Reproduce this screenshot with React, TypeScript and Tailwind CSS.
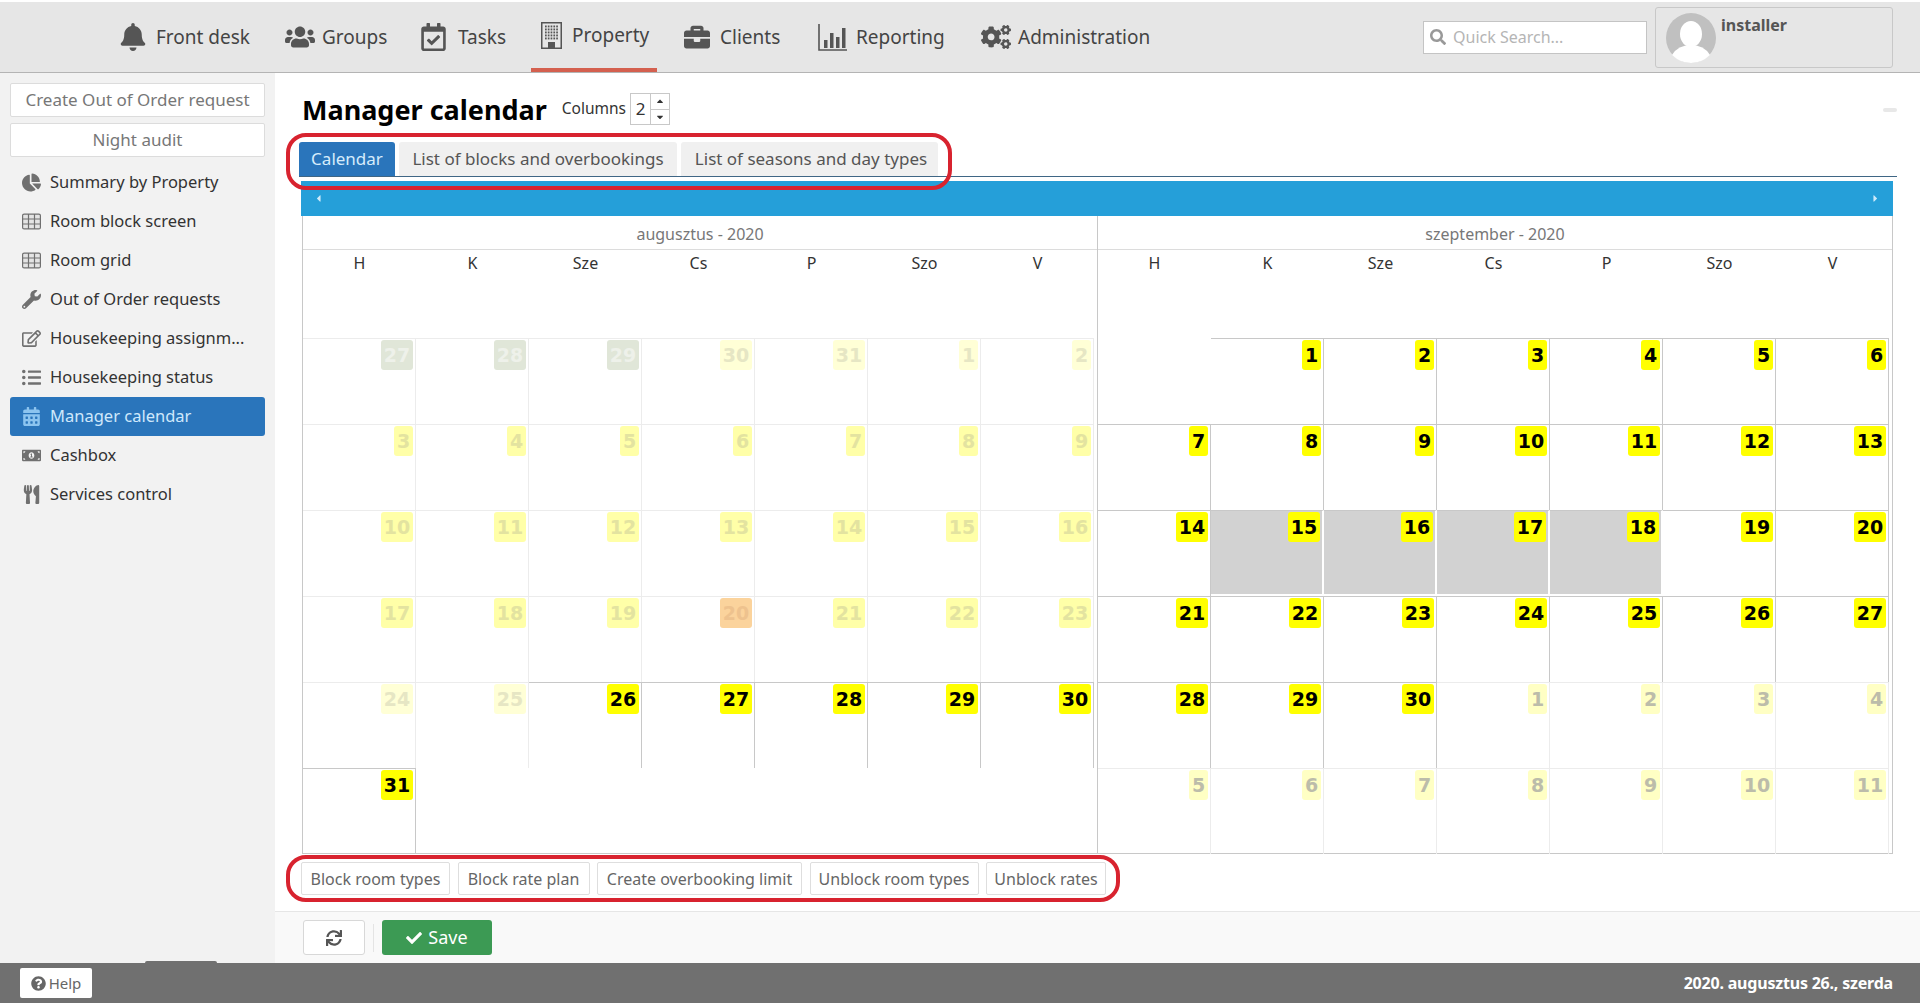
import { FaBell, FaUsers, FaRegCalendarCheck, FaBriefcase, FaCogs, FaSearch, FaChartPie, FaWrench, FaRegEdit, FaListUl, FaCalendarAlt, FaMoneyBillAlt, FaUtensils, FaSync, FaCheck, FaQuestionCircle, FaCaretLeft, FaCaretRight, FaCaretUp, FaCaretDown } from "react-icons/fa";

function BuildingIcon({ className }: { className?: string }) {
  const dots = [];
  for (let r = 0; r < 5; r++) {
    for (let c = 0; c < 5; c++) {
      dots.push(<rect key={`${r}-${c}`} x={4 + c * 2.8} y={3.5 + r * 3} width="1.7" height="1.9" fill="#555" />);
    }
  }
  return (
    <svg viewBox="0 0 21 27" className={className}>
      <rect x="0.75" y="0.75" width="19.5" height="25.5" fill="none" stroke="#555" strokeWidth="1.5" />
      {dots}
      <rect x="7" y="20" width="7" height="6" fill="#555" />
    </svg>
  );
}

function BarsIcon({ className }: { className?: string }) {
  return (
    <svg viewBox="0 0 29 27" className={className}>
      <path d="M1 0V26H29" fill="none" stroke="#555" strokeWidth="1.6" />
      <rect x="6" y="16" width="3.5" height="8" fill="#555" />
      <rect x="12" y="9" width="3.5" height="15" fill="#555" />
      <rect x="18" y="13" width="3.5" height="11" fill="#555" />
      <rect x="24" y="4" width="3.5" height="20" fill="#555" />
    </svg>
  );
}

function GridIcon({ className }: { className?: string }) {
  return (
    <svg viewBox="0 0 19 16" className={className}>
      <rect x="0.6" y="0.6" width="17.8" height="14.8" rx="1.5" fill="#e4e4e4" stroke="#707070" strokeWidth="1.2" />
      <path d="M0.6 5.5H18.4M0.6 10.5H18.4M6.5 0.6V15.4M12.5 0.6V15.4" stroke="#707070" strokeWidth="1.2" />
    </svg>
  );
}

const navItems = [
  { label: "Front desk", icon: <FaBell className="w-[26px] h-[28px] text-[#555]" />, box: "w-[36px]", width: "w-[165px] ml-[120px]" },
  { label: "Groups", icon: <FaUsers className="w-[30px] h-[28px] text-[#555]" />, box: "w-[37px]", width: "w-[136px]" },
  { label: "Tasks", icon: <FaRegCalendarCheck className="w-[25px] h-[28px] text-[#555]" />, box: "w-[37px]", width: "w-[110px]" },
  { label: "Property", icon: <BuildingIcon className="w-[21px] h-[27px]" />, box: "w-[31px]", width: "w-[152px]" },
  { label: "Clients", icon: <FaBriefcase className="w-[28px] h-[26px] text-[#555]" />, box: "w-[37px]", width: "w-[135px]" },
  { label: "Reporting", icon: <BarsIcon className="w-[29px] h-[27px]" />, box: "w-[38px]", width: "w-[163px]" },
  { label: "Administration", icon: <FaCogs className="w-[30px] h-[26px] text-[#555]" />, box: "w-[37px]", width: "w-[200px]" },
];

const sideItems = [
  { label: "Summary by Property", icon: FaChartPie },
  { label: "Room block screen", icon: GridIcon },
  { label: "Room grid", icon: GridIcon },
  { label: "Out of Order requests", icon: FaWrench },
  { label: "Housekeeping assignm...", icon: FaRegEdit },
  { label: "Housekeeping status", icon: FaListUl },
  { label: "Manager calendar", icon: FaCalendarAlt, active: true },
  { label: "Cashbox", icon: FaMoneyBillAlt },
  { label: "Services control", icon: FaUtensils },
];

const actions = [
  { label: "Block room types", width: "w-[149px]" },
  { label: "Block rate plan", width: "w-[132px]" },
  { label: "Create overbooking limit", width: "w-[205px]" },
  { label: "Unblock room types", width: "w-[169px]" },
  { label: "Unblock rates", width: "w-[120px]" },
];

const weekdays = ["H", "K", "Sze", "Cs", "P", "Szo", "V"];

type Kind = "past" | "fade" | "pale" | "next" | "today" | "on" | "block";
type Day = { n: number; kind: Kind } | null;

const run = (from: number, to: number, kind: Kind): Day[] => {
  const out: Day[] = [];
  for (let n = from; n <= to; n++) out.push({ n, kind });
  return out;
};

const august: Day[] = [
  ...run(27, 29, "past"),
  ...run(30, 31, "pale"),
  ...run(1, 2, "pale"),
  ...run(3, 9, "fade"),
  ...run(10, 16, "fade"),
  ...run(17, 19, "fade"),
  { n: 20, kind: "today" },
  ...run(21, 23, "fade"),
  ...run(24, 25, "pale"),
  ...run(26, 31, "on"),
];

const september: Day[] = [
  null,
  ...run(1, 14, "on"),
  ...run(15, 18, "block"),
  ...run(19, 30, "on"),
  ...run(1, 4, "next"),
  ...run(5, 11, "next"),
];

const badgeStyle: Record<Kind, string> = {
  past: "bg-[#e0e6d8] text-[#eef1ea]",
  fade: "bg-[#ffffa8] text-[#e3e3a0]",
  pale: "bg-[#ffffd6] text-[#e6e6c4]",
  next: "bg-[#ffffc4] text-[#bcbcaa]",
  today: "bg-[#fbd39c] text-[#eec28e]",
  on: "bg-[#ffff00] text-black",
  block: "bg-[#ffff00] text-black",
};

function DayCell({ day }: { day: Day }) {
  if (!day) return <div className="h-[86px]" />;
  const strong = day.kind === "on" || day.kind === "block";
  return (
    <div
      className={`h-[86px] flex justify-end items-start pt-[1px] pr-[2px] border-t ${
        strong ? "border-t-[#c8c8c8]" : "border-t-[#ececec]"
      } ${
        day.kind === "block"
          ? "bg-[#d2d2d2] bg-clip-padding border-r-2 border-b-2 border-r-white border-b-white"
          : strong
            ? "border-r border-r-[#c8c8c8]"
            : "border-r border-r-[#ececec]"
      }`}
    >
      <span
        className={`h-[30px] ${day.n >= 10 ? "w-[32px]" : "w-[19px]"} rounded-[3px] text-[19px] leading-[30px] font-bold text-center font-['DejaVu_Sans',sans-serif] ${badgeStyle[day.kind]}`}
      >
        {day.n}
      </span>
    </div>
  );
}

function Month({ title, days }: { title: string; days: Day[] }) {
  return (
    <div className="flex-1 min-w-0 border-r border-[#c8c8c8]">
      <div className="h-[34px] flex items-center justify-center pt-[2px] text-[16px] text-[#777] border-b border-[#dcdcdc]">
        {title}
      </div>
      <div className="grid grid-cols-7 h-[88px] pr-[3px]">
        {weekdays.map((w) => (
          <div key={w} className="text-center text-[16px] text-[#333] pt-[1px]">
            {w}
          </div>
        ))}
      </div>
      <div className="grid grid-cols-7 pr-[3px]">
        {days.map((d, i) => (
          <DayCell key={i} day={d} />
        ))}
      </div>
    </div>
  );
}

export default function App() {
  return (
    <div className="h-[1003px] flex flex-col font-['Noto_Sans',sans-serif] text-[#333] bg-white overflow-hidden">
      <header className="h-[71px] mt-[2px] shrink-0 flex items-stretch bg-[#e6e6e6] border-b border-[#b4b4b4]">
        {navItems.map((item) => {
          const active = item.label === "Property";
          return (
            <div key={item.label} className={`flex items-center ${item.width}`}>
              <div className={`flex items-center h-full ${active ? "border-b-4 border-[#d4604f] px-[10px] w-[126px]" : ""}`}>
                <div className={`${item.box} shrink-0 flex items-center`}>{item.icon}</div>
                <span className="text-[19px] text-[#444] whitespace-nowrap">{item.label}</span>
              </div>
            </div>
          );
        })}
        <div className="ml-auto flex items-center gap-2 pr-[27px]">
          <div className="w-[224px] h-[33px] bg-white border border-[#c4c4c4] flex items-center pl-[6px] gap-[7px]">
            <FaSearch className="text-[16px] text-[#999]" />
            <span className="text-[16px] text-[#b5b5b5]">Quick Search...</span>
          </div>
          <div className="w-[238px] h-[61px] border border-[#c8c8c8] rounded-[3px] flex items-start pl-[10px] pt-[5px] gap-[5px]">
            <svg viewBox="0 0 50 50" className="w-[50px] h-[50px]">
              <circle cx="25" cy="25" r="25" fill="#c0c0c0" />
              <ellipse cx="25" cy="21" rx="11" ry="13" fill="#fff" />
              <path d="M6 42 Q12 32 25 32 Q38 32 44 42 Q36 50 25 50 Q14 50 6 42Z" fill="#fff" />
            </svg>
            <span className="text-[16px] font-bold text-[#555] leading-[20px] pt-[2px]">installer</span>
          </div>
        </div>
      </header>

      <div className="flex-1 flex min-h-0">
        <aside className="w-[275px] shrink-0 bg-[#f2f2f2] px-[10px] pt-[10px]">
          <div className="h-[34px] bg-white border border-[#dcdcdc] rounded-[2px] flex items-center justify-center text-[17px] text-[#777]">
            Create Out of Order request
          </div>
          <div className="h-[34px] mt-[6px] mb-[6px] bg-white border border-[#dcdcdc] rounded-[2px] flex items-center justify-center text-[17px] text-[#777]">
            Night audit
          </div>
          {sideItems.map((item) => {
            const Icon = item.icon;
            return (
              <div
                key={item.label}
                className={`h-[39px] flex items-center pl-[12px] gap-[9px] rounded-[3px] ${
                  item.active ? "bg-[#2a75bb] text-[#cfe8fb]" : "text-[#333]"
                }`}
              >
                <Icon className={`w-[19px] h-[19px] ${item.active ? "text-[#8cc4ef]" : "text-[#707070]"}`} />
                <span className="text-[16.5px] whitespace-nowrap">{item.label}</span>
              </div>
            );
          })}
        </aside>

        <main className="flex-1 min-w-0 flex flex-col relative">
          <div className="absolute right-[23px] top-[35px] w-[14px] h-[4px] rounded-[2px] bg-[#e8e8e8]" />
          <div className="flex-1 pl-[27px] pr-[27px]">
            <div className="h-[69px] flex items-center pt-[3px]">
              <h1 className="text-[27px] font-bold text-black leading-none whitespace-nowrap">Manager calendar</h1>
              <span className="ml-[15px] text-[15.5px]">Columns</span>
              <div className="ml-[4px] w-[40px] h-[32px] border border-[#c8c8c8] flex">
                <span className="flex-1 text-center text-[17px] leading-[30px]">2</span>
                <div className="w-[19px] border-l border-[#c8c8c8] flex flex-col text-[10px] text-[#333]">
                  <div className="flex-1 flex items-center justify-center border-b border-[#c8c8c8]">
                    <FaCaretUp />
                  </div>
                  <div className="flex-1 flex items-center justify-center">
                    <FaCaretDown />
                  </div>
                </div>
              </div>
            </div>

            <div className="relative flex gap-[4px] h-[35px] -ml-[3px] -mr-[4px] border-b border-[#3f6685]">
              <div className="w-[96px] bg-[#2a75bb] text-[#d6ecfb] text-[17px] rounded-t-[3px] flex items-center justify-center">Calendar</div>
              <div className="w-[278px] bg-[#f0f0f0] text-[#555] text-[17px] rounded-t-[3px] flex items-center justify-center">List of blocks and overbookings</div>
              <div className="w-[257px] pl-[3px] bg-[#f0f0f0] text-[#555] text-[17px] rounded-t-[3px] flex items-center justify-center">List of seasons and day types</div>
              <div className="absolute -left-[13px] top-[-9px] w-[666px] h-[57px] rounded-[20px] border-[4px] border-[#d8232f]" />
            </div>

            <div className="mt-[4px] h-[35px] -ml-[1px] bg-[#259fd9] flex items-center justify-between px-[12px] text-[11px] text-[#cfeafa]">
              <FaCaretLeft />
              <FaCaretRight />
            </div>

            <div className="flex h-[638px] border-l border-b border-[#c8c8c8]">
              <Month title="augusztus - 2020" days={august} />
              <Month title="szeptember - 2020" days={september} />
            </div>

            <div className="relative mt-[8px] flex gap-[7.5px] h-[33px] -ml-[1px]">
              {actions.map((b) => (
                <div key={b.label} className={`${b.width} bg-white border border-[#dedede] rounded-[2px] flex items-center justify-center text-[16px] text-[#666] whitespace-nowrap`}>
                  {b.label}
                </div>
              ))}
              <div className="absolute -left-[15px] top-[-7px] w-[834px] h-[47px] rounded-[20px] border-[4px] border-[#d8232f]" />
            </div>
          </div>

          <div className="h-[52px] shrink-0 bg-[#f9f9f9] border-t border-[#e6e6e6] flex items-center pl-[28px]">
            <div className="w-[62px] h-[35px] bg-white border border-[#d8d8d8] rounded-[3px] flex items-center justify-center">
              <FaSync className="text-[16px] text-[#555]" />
            </div>
            <div className="w-px h-[28px] bg-[#e4e4e4] mx-[8px]" />
            <div className="w-[110px] h-[35px] bg-[#3c9a54] rounded-[3px] flex items-center justify-center gap-[6px] text-white text-[18px]">
              <FaCheck className="text-[16px]" />
              Save
            </div>
          </div>
        </main>
      </div>

      <footer className="relative h-[40px] shrink-0 bg-[#707070] flex items-center justify-between pl-[20px] pr-[27px]">
        <div className="absolute left-[145px] -top-[2px] w-[72px] h-[2px] rounded-t-full bg-[#707070]" />
        <div className="w-[72px] h-[30px] bg-white rounded-[2px] flex items-center justify-center gap-[3px] text-[15px] text-[#666]">
          <FaQuestionCircle className="text-[15px]" />
          Help
        </div>
        <span className="text-white font-bold text-[16px] tracking-[-0.2px]">2020. augusztus 26., szerda</span>
      </footer>
    </div>
  );
}
